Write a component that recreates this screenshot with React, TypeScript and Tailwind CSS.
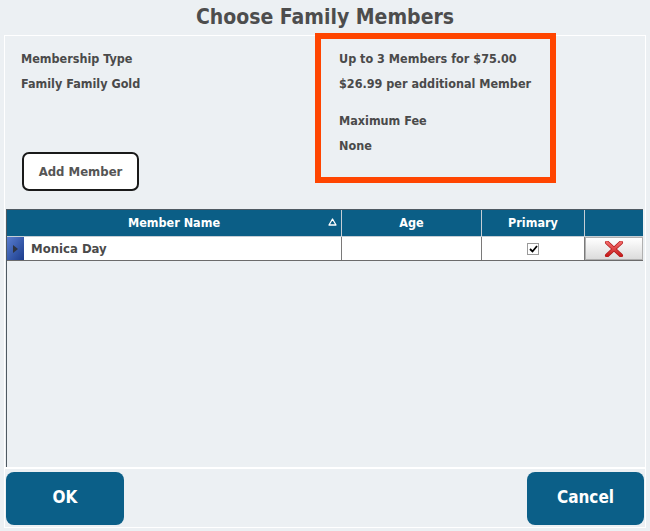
import React from 'react';

const RedX: React.FC = () => (
  <svg width="20" height="16" viewBox="0 0 20 16">
    <defs>
      <linearGradient id="xg" x1="0" y1="0" x2="0" y2="1">
        <stop offset="0" stopColor="#f26a6a" />
        <stop offset="1" stopColor="#c81e1e" />
      </linearGradient>
    </defs>
    <path d="M3 1.5 L17 14.5 M17 1.5 L3 14.5" stroke="#b01818" strokeWidth="4" strokeLinecap="round" />
    <path d="M3 1.5 L17 14.5 M17 1.5 L3 14.5" stroke="url(#xg)" strokeWidth="2.6" strokeLinecap="round" />
  </svg>
);

const SortUp: React.FC = () => (
  <svg width="9" height="8" viewBox="0 0 9 8">
    <path d="M4.5 1 L8 7 L1 7 Z" fill="none" stroke="white" strokeWidth="1.3" strokeLinejoin="round" />
  </svg>
);

const App: React.FC = () => {
  return (
    <div className="relative w-[650px] h-[531px] bg-[#ecf0f3] text-[#4a4a4a] font-['DejaVu_Sans_Condensed','DejaVu_Sans',sans-serif] font-bold flex flex-col">
      {/* title */}
      <div className="h-[35px] flex items-center justify-center text-[21px] text-[#4d4d4d]">
        Choose Family Members
      </div>

      {/* main panel */}
      <div className="mx-[4px] h-[433px] border border-white flex flex-col">
        <div className="h-[173px] flex text-[12.5px]">
          <div className="w-[334px] pl-[16px] pt-[10px] flex flex-col">
            <div className="leading-[25px]">Membership Type</div>
            <div className="leading-[25px]">Family Family Gold</div>
            <button className="mt-[56px] ml-[1px] w-[117px] h-[39px] bg-white border-2 border-[#1a1a1a] rounded-[7px] text-[13px] text-[#555] font-bold">
              Add Member
            </button>
          </div>
          <div className="pt-[10px] flex flex-col">
            <div className="leading-[25px]">Up to 3 Members for $75.00</div>
            <div className="leading-[25px]">$26.99 per additional Member</div>
            <div className="leading-[25px] mt-[12px]">Maximum Fee</div>
            <div className="leading-[25px]">None</div>
          </div>
        </div>

        {/* grid */}
        <div className="ml-[1px] w-[637px] h-[258px] border-l border-t border-[#4f5a62]">
          <div className="flex h-[27px] bg-[#0b5e86] text-white text-[12.5px] border-b border-[#c5ced5]">
            <div className="relative w-[335px] flex items-center justify-center border-r border-[#c5ced5]">
              Member Name
              <span className="absolute right-[4px] top-[8px]"><SortUp /></span>
            </div>
            <div className="w-[140px] flex items-center justify-center border-r border-[#c5ced5]">Age</div>
            <div className="w-[103px] flex items-center justify-center border-r border-[#c5ced5]">Primary</div>
            <div className="w-[58px]" />
          </div>
          <div className="flex h-[24px] bg-white border-b border-[#6b6b6b] text-[13px]">
            <div className="w-[335px] flex items-stretch border-r border-[#7a7a7a]">
              <div className="w-[17px] bg-gradient-to-br from-[#5a7fd0] to-[#1c3c8c] flex items-center justify-center">
                <span className="w-0 h-0 border-y-[4px] border-y-transparent border-l-[5px] border-l-[#2e3440]" />
              </div>
              <div className="pl-[7px] flex items-center">Monica Day</div>
            </div>
            <div className="w-[140px] border-r border-[#7a7a7a]" />
            <div className="w-[103px] flex items-center justify-center border-r border-[#7a7a7a]">
              <span className="w-[12px] h-[12px] border border-[#9a9a9a] bg-white flex items-center justify-center">
                <svg width="9" height="8" viewBox="0 0 9 8">
                  <path d="M1 4 L3.5 6.5 L8 1" fill="none" stroke="black" strokeWidth="1.8" />
                </svg>
              </span>
            </div>
            <div className="w-[58px] p-0">
              <button className="w-full h-full bg-gradient-to-b from-white to-[#dcdcdc] border border-[#b0b0b0] flex items-center justify-center">
                <RedX />
              </button>
            </div>
          </div>
        </div>
      </div>

      {/* footer */}
      <div className="mx-[4px] h-[60px] border border-white flex items-center justify-between px-[1px]">
        <button className="w-[118px] h-[53px] rounded-[8px] bg-[#0b5f88] text-white text-[17px] font-bold">
          OK
        </button>
        <button className="w-[117px] h-[53px] rounded-[8px] bg-[#0b5f88] text-white text-[17px] font-bold">
          Cancel
        </button>
      </div>

      {/* highlight annotation */}
      <div className="absolute left-[315px] top-[33px] w-[241px] h-[150px] border-[6px] border-[#ff4500] pointer-events-none" />
    </div>
  );
};

export default App;
